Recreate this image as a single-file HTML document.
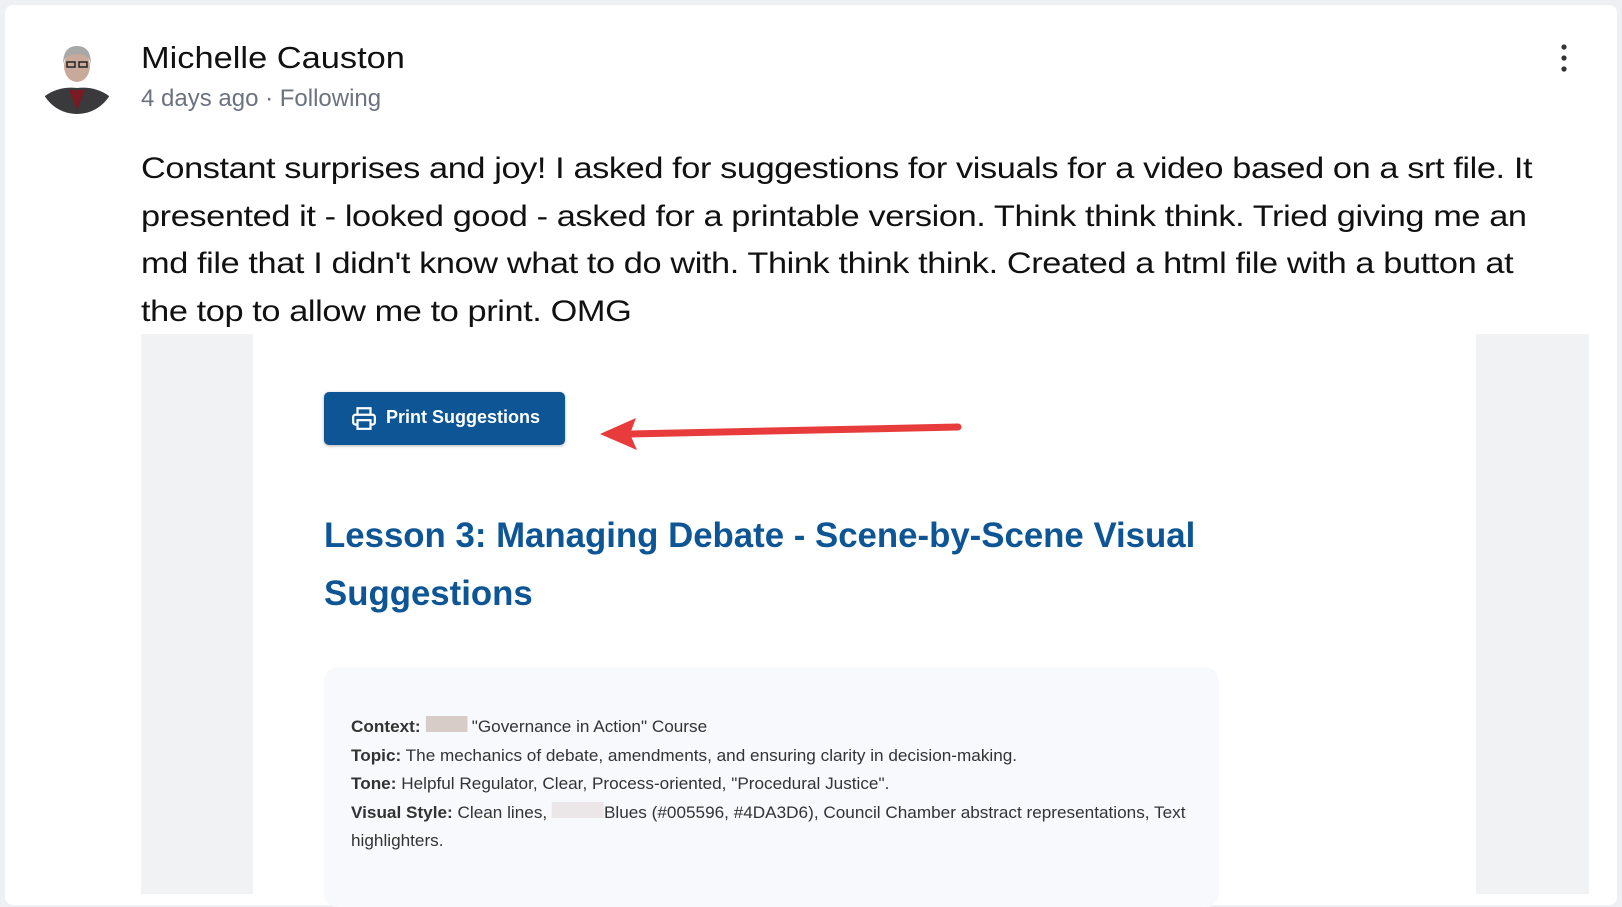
<!DOCTYPE html>
<html><head><meta charset="utf-8"><style>
body{margin:0;width:1622px;height:894px;background:#eef0f3;overflow:hidden;font-family:"Liberation Sans",sans-serif;}
.card{position:absolute;left:5px;top:5px;width:1612px;height:900px;background:#fff;border-radius:8px;}
.abs{position:absolute;white-space:nowrap;transform-origin:0 0;}
</style></head><body>
<div class="card"></div>
<svg class="abs" style="left:39px;top:38px" width="76" height="76" viewBox="0 0 76 76">
<defs><clipPath id="c"><circle cx="38" cy="38" r="38"/></clipPath></defs>
<g clip-path="url(#c)"><rect width="76" height="76" fill="#fff"/>
<path d="M0 76 L6 58 Q20 48 38 50 Q56 48 70 58 L76 76Z" fill="#3a3a3c"/>
<path d="M30 52 L38 72 L46 52Z" fill="#7a1a22"/>
<ellipse cx="38" cy="28" rx="13" ry="16" fill="#c9a99a"/>
<path d="M24 26 Q24 8 38 8 Q52 8 52 26 Q50 16 38 16 Q26 16 24 26Z" fill="#a8a8a8"/>
<rect x="28" y="24" width="8" height="5" fill="none" stroke="#222" stroke-width="1.5"/><rect x="40" y="24" width="8" height="5" fill="none" stroke="#222" stroke-width="1.5"/></g></svg>
<div class="abs" style="left:141px;top:40px;font-size:31px;color:#111;transform:scaleX(1.11);">Michelle Causton</div>
<div class="abs" style="left:141px;top:85px;font-size:24px;color:#6b7280;transform:scaleX(1.0);">4 days ago · Following</div>
<svg class="abs" style="left:1558px;top:43px" width="12" height="30"><circle cx="6" cy="4" r="2.6" fill="#333"/><circle cx="6" cy="15" r="2.6" fill="#333"/><circle cx="6" cy="26" r="2.6" fill="#333"/></svg>
<div class="abs" style="left:141px;top:145px;font-size:30px;line-height:47.7px;color:#111;letter-spacing:-0.35px;transform:scaleX(1.144);">Constant surprises and joy! I asked for suggestions for visuals for a video based on a srt file. It<br>presented it - looked good - asked for a printable version. Think think think. Tried giving me an<br>md file that I didn't know what to do with. Think think think. Created a html file with a button at<br>the top to allow me to print. OMG</div>
<div class="abs" style="left:141px;top:334px;width:1448px;height:560px;background:#f1f2f4;"></div>
<div class="abs" style="left:253px;top:334px;width:1223px;height:560px;background:#fff;"></div>
<div class="abs" style="left:324px;top:392px;width:241px;height:53px;background:#0d5595;border-radius:5px;box-shadow:0 1px 3px rgba(0,0,0,.3);"></div>
<svg class="abs" style="left:351px;top:405px" width="26" height="26" viewBox="0 0 24 24" fill="none" stroke="#fff" stroke-width="2"><path d="M6 9V3h12v6M6 18H4a2 2 0 0 1-2-2v-5a2 2 0 0 1 2-2h16a2 2 0 0 1 2 2v5a2 2 0 0 1-2 2h-2"/><rect x="6" y="14" width="12" height="8"/></svg>
<div class="abs" style="left:386px;top:407px;font-size:18px;font-weight:bold;color:#fff;">Print Suggestions</div>
<svg class="abs" style="left:590px;top:410px" width="390" height="45"><path d="M368 17 L40 24" stroke="#e83b3b" stroke-width="7" stroke-linecap="round"/><path d="M10 24 L46 8 L40 24 L47 40Z" fill="#e83b3b"/></svg>
<div class="abs" style="left:324px;top:507px;font-size:35px;line-height:58px;font-weight:bold;color:#0d5595;transform:scaleX(0.994);">Lesson 3: Managing Debate - Scene-by-Scene Visual<br>Suggestions</div>
<div class="abs" style="left:324px;top:667px;width:895px;height:240px;background:#f7f9fc;border-radius:14px;"></div>
<div class="abs" style="left:351px;top:713px;font-size:16.5px;line-height:28.5px;color:#333;transform:scaleX(1.04);">
<b>Context:</b> <span style="display:inline-block;width:40px;height:16px;background:#d8ccc8"></span> "Governance in Action" Course<br>
<b>Topic:</b> The mechanics of debate, amendments, and ensuring clarity in decision-making.<br>
<b>Tone:</b> Helpful Regulator, Clear, Process-oriented, "Procedural Justice".<br>
<b>Visual Style:</b> Clean lines, <span style="display:inline-block;width:50px;height:16px;background:#ebe6e8"></span>Blues (#005596, #4DA3D6), Council Chamber abstract representations, Text<br>highlighters.</div>
</body></html>
